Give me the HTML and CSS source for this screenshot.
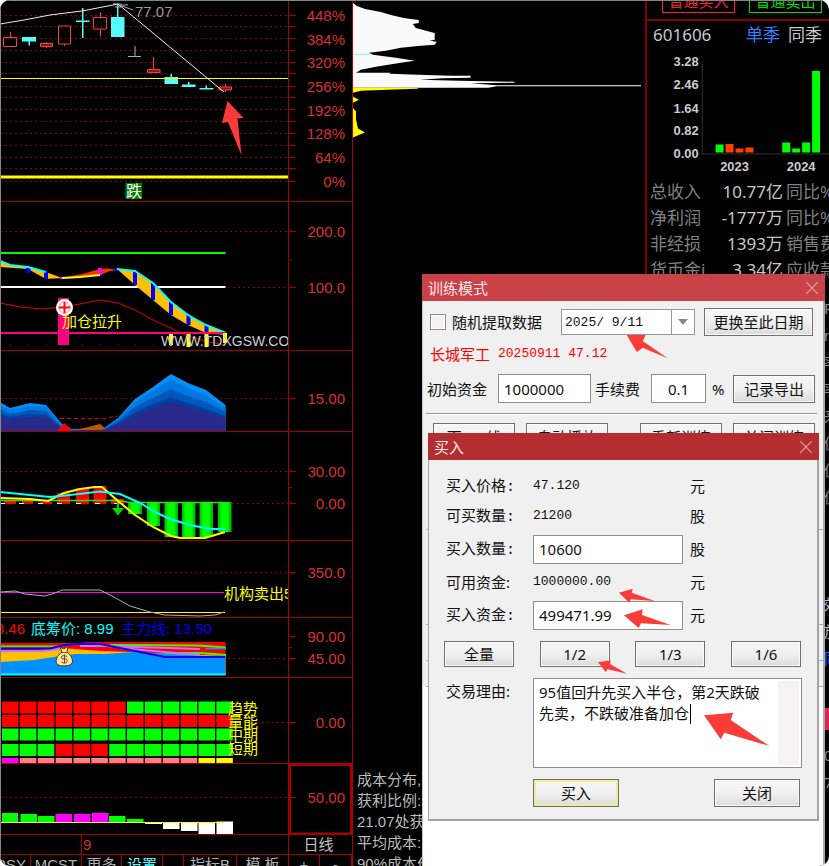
FILE: index.html
```html
<!DOCTYPE html>
<html lang="zh-CN">
<head>
<meta charset="utf-8">
<meta name="viewport" content="width=device-width, initial-scale=1">
<title>训练模式</title>
<link rel="stylesheet" href="styles.css">
</head>
<body>
<div class="app">
  <main class="charts">
    <svg class="pane" viewBox="0 0 352 202">
      <defs><clipPath id="plot"><rect x="0" y="0" width="288" height="866"/></clipPath></defs>
      <path class="dots" d="M0 15.5H288M0 26.5H288M0 38.5H288M0 50.5H288M0 62.5H288M0 73.5H288M0 86.5H288M0 97.5H288M0 109.5H288M0 121.5H288M0 133.5H288M0 145.5H288M0 157.5H288M0 168.5H288M0 181.5H288"/>
      <path class="axis" d="M288.5 0V202M289 15.5h7M289 26.5h7M289 38.5h7M289 50.5h7M289 62.5h7M289 73.5h7M289 86.5h7M289 97.5h7M289 109.5h7M289 121.5h7M289 133.5h7M289 145.5h7M289 157.5h7M289 168.5h7M289 181.5h7M0 201.5H352"/>
      <g class="scale"><text x="345" y="21">448%</text><text x="345" y="45">384%</text><text x="345" y="68">320%</text><text x="345" y="92">256%</text><text x="345" y="116">192%</text><text x="345" y="139">128%</text><text x="345" y="163">64%</text><text x="345" y="187">0%</text></g>
      <g class="up">
        <path d="M3.5 37.5h13v9h-13zM10.5 32V37M58.5 26h12v18h-12zM64.5 44v2M93.500 17.500h13v11.500h-13zM100.500 12v5.500M100.500 29v7.500M153.500 57v13M225.500 84v8M46.500 42v6"/>
        <path class="flat" d="M40.5 43.5h12v3h-12zM147.500 69.500h12.500v3h-12.500zM219 87h12.500v3h-12.500z"/>
      </g>
      <path class="down" d="M22 37h14v4.500h-6v4h-1.500v-4h-6.500zM76 20.500h6V8h1.500v12.500h6v1.500h-6v16h-1.500v-16h-6zM111 17h6V5h1.500v12h6v20h-13.500zM164.500 77h6v-3h1.500v3h6v7h-13.500zM182 84.500h6v-2.500h1.500v2.500h6v2.500h-13.500zM199.500 88h6v-2.500h1.500v2.500h6.500v1.500h-14z"/>
      <path class="yellow" d="M0 78.500H288"/>
      <path class="yellow thick" d="M0 177H288"/>
      <path class="gray" d="M135 46V56M128 56.500h13M122 6l11 4M128 5l-7 0M113 4h8v3h-6"/>
      <path class="white" d="M0 24L24 20L50 15L82 11L118 4L224 92"/>
      <text class="peak" x="135" y="17">77.07</text>
      <rect x="125.500" y="183" width="16.500" height="16" fill="#008000"/>
      <text class="badge" x="126" y="197">跌</text>
      <path class="mark" d="M227.500 101L243.500 118L237.500 118.500L241.500 155.500L228 122L222 123Z"/>
    </svg>
    <svg class="pane" viewBox="0 202 352 149">
      <path class="dots" d="M0 231.500H288M228 287.500H288"/>
      <path class="axis" d="M288.500 202V351M289 231.500h7M289 260h3M289 287.500h7M0 350.500H352"/>
      <g class="scale"><text x="345" y="237">200.0</text><text x="345" y="293">100.0</text></g>
      <path d="M0 253H225.500" stroke="#0f0" stroke-width="2"/>
      <path d="M0 287H225.500" stroke="#fff" stroke-width="2"/>
      <path d="M0 261L10 265L28 267L46 272L62 278L46 279L28 269L0 267ZM117 269L135 271L153 283L171 302L188 315L206 325L226 333V335L206 333L188 325L171 315L153 300L135 285Z" fill="#ffc000"/>
      <path d="M62 278L82 274L100 269L108 268.500L117 270L110 271L100 275L80 277Z" fill="#ff3000"/>
      <path d="M26 267h4v3h-4zM26.500 268h4v5h-4zM44 272h4v7h-4zM133 271h4v14h-4zM151 282h4v18h-4zM169 301h4v14h-4zM186.500 314h4v11h-4zM204.500 325h4v8h-4zM115 268h4v3h-4z" fill="#00f"/>
      <path d="M98 268h4v7h-4zM60 277h4v2h-4z" fill="#f0f"/>
      <path d="M0 261L10 265L28 267L46 272M117 269L135 271L153 283L171 302L188 315L206 325L226 333" class="cyan"/>
      <path d="M62 278L80 277L100 275" stroke-width="2" class="yellow"/>
      <path d="M0 303L20 307L42 309L64 307L85 303L100 300L118 303L135 310L153 320L171 328L185 335L205 341L225 345" class="redline"/>
      <path d="M58 298h11v47h-11z" fill="#ff0080"/>
      <path d="M0 333H226" stroke="#ff0080" stroke-width="2"/>
      <path d="M10 345h1M28 345h1M46 345h1M82 345h1M100 345h1M118 345h1M135 345h1M153 345h1" class="redline"/>
      <path d="M169 334h4v11h-4zM186.500 334h4v13h-4zM204.500 334h4v13h-4zM223 333h4v10h-4z" fill="#ff0"/>
      <g clip-path="url(#plot)"><text class="watermark" x="161" y="346">WWW.TDXGSW.COM</text></g>
      <circle cx="64.500" cy="307.500" r="8.500" fill="#fff"/>
      <path d="M58.500 307.500h12M64.500 301.500v12" stroke="#f00" stroke-width="2"/>
      <circle cx="64.500" cy="307.500" r="5.500" fill="none" stroke="#f66" stroke-width=".8"/>
      <text class="note" x="62" y="327">加仓拉升</text>
    </svg>
    <svg class="pane" viewBox="0 351 352 81">
      <path class="dots" d="M0 398.500H288"/>
      <path d="M0 402L10 408L30 403L46 405L62 424L72 429L104 428L118 418L135 399L153 387L171 374L188 383L206 390L225.500 405V431H0Z" fill="#0090f8"/>
      <path d="M0 405L10 410L30 406L46 407L62 425L72 430L104 429L118 419L135 402L153 391L171 379L188 388L206 395L225.500 408V431H0Z" fill="#0078e0"/>
      <path d="M0 409L10 414L30 410L46 411L62 427L72 430L104 429L118 421L135 407L153 398L171 389L188 396L206 402L225.500 412V431H0Z" fill="#0058bc"/>
      <path d="M0 413L10 417L30 414L46 415L62 428L72 430L104 430L118 423L135 412L153 404L171 397L188 403L206 409L225.500 416V431H0Z" fill="#0040a0"/>
      <path d="M0 416L10 419L30 417L46 417L62 428L72 430L104 430L118 424L135 415L153 408L171 402L188 407L206 412L225.500 418V431H0Z" fill="#29298c"/>
      <path d="M76 430L88 427L100 424L105 428L102 430Z" fill="#b45a00"/>
      <path class="redline" stroke-dasharray="4 3" d="M60 418.500H104L118 416"/>
      <path d="M57 431L64.500 423L72 431Z" fill="#f00"/>
      <path class="axis" d="M288.500 351V432M289 398.500h7M0 431.500H352"/>
      <g class="scale"><text x="345" y="404">15.00</text></g>
    </svg>
    <svg class="pane" viewBox="0 432 352 109">
      <defs><linearGradient id="bar"><stop offset="0" stop-color="#0b0"/><stop offset=".3" stop-color="#0f0"/><stop offset=".7" stop-color="#0f0"/><stop offset="1" stop-color="#0a0"/></linearGradient></defs>
      <path class="dots" d="M0 471.500H288M232 503.500H288"/>
      <path class="axis" d="M288.500 432V541M289 471.500h7M289 487.500h3M289 503.500h7M0 540.500H352"/>
      <g class="scale"><text x="345" y="477">30.00</text><text x="345" y="509">0.00</text></g>
      <path d="M4 500h12v4h-12zM22 501h11v3h-11zM40 502h12v2h-12zM57 493h13v11h-13zM76 488h13v16h-13zM93.500 486h13v18h-13zM111 499h13v5h-13z" fill="#f00"/>
      <g fill="url(#bar)"><rect x="128" y="502" width="14" height="12"/><rect x="147" y="502" width="13" height="24"/><rect x="164.500" y="502" width="13.500" height="35"/><rect x="182" y="502" width="13.500" height="36"/><rect x="199.500" y="502" width="13.500" height="35"/><rect x="218" y="502" width="13.500" height="30"/></g>
      <path d="M0 503.500H128" stroke="#fff" stroke-dasharray="5 14"/>
      <path d="M0 500.500H118L130 502.500H224" stroke="#30e000" fill="none" stroke-width="1.500"/>
      <path d="M117 500h2v8h5L118 515.500L112 508h5z" fill="#00d800"/>
      <path class="yellow curve" d="M0 498L30 499L48 501L64 493L80 489L95 487L102 487L118 501L135 515L153 527L171 536L180 538L205 538L225 532"/>
      <path class="cyan" d="M0 492L30 495L50 497L70 495L100 491.500L120 494L140 503L155 512L170 519L190 525L210 529L226 529"/>
    </svg>
    <svg class="pane" viewBox="0 541 352 77">
      <path class="dots" d="M0 572.500H288"/>
      <path class="axis" d="M288.500 541V618M289 572.500h7M0 617.500H352"/>
      <g class="scale"><text x="345" y="578">350.0</text></g>
      <path d="M0 592.500H224" stroke="#f0f"/>
      <path class="yellow" d="M0 612.500H225"/>
      <path class="gray" d="M0 592L15 591L25 594L45 596L55 593L62 590L100 590L112 596L130 606L150 612L165 615L200 616L215 615L224 612"/>
      <g clip-path="url(#plot)"><text class="note" x="224" y="599">机构卖出5</text></g>
    </svg>
    <svg class="pane" viewBox="0 618 352 60">
      <path class="dots" d="M228 658.500H288"/>
      <path class="axis" d="M288.500 618V678M289 636.500h7M289 647.500h3M289 658.500h7M0 677.500H352"/>
      <g class="scale"><text x="345" y="642">90.00</text><text x="345" y="664">45.00</text></g>
      <g class="legend"><text x="25" y="634" fill="#f00" text-anchor="end">8.46</text><text x="31" y="634" fill="#0ff">底筹价: 8.99</text><text x="121" y="634" fill="#00e">主力线: 13.50</text></g>
      <path d="M0 643H80L84 642H225.500V675H0Z" fill="#f00"/>
      <path d="M0 652L40 650L62 648L100 651L130 652L225.500 656V675H0Z" fill="#ffc000"/>
      <path d="M0 662L34 660L60 656L75 654H105L135 652L225.500 657V675H0Z" fill="#0090ff"/>
      <path d="M0 646.500H60M110 645L198 645.500L226 647.500M165 653H200L226 655" stroke="#3f0" stroke-width="2" fill="none"/>
      <path d="M0 651H40L60 649M120 648L165 652L200 655M80 646H105L200 649" stroke="#d06cff" stroke-width="2" fill="none"/>
      <path d="M205 648.500H226" stroke="#2090ff" stroke-width="1.500"/>
      <path d="M0 648.500H50L64 645L85 643.500L100 644L130 650L165 657H225" stroke="#00f" stroke-width="2" fill="none"/>
      <path class="cyan" d="M0 674.500H225.500"/>
      <path d="M60 647L64 649L68 646L67 652Q73 657 72.500 662Q71 666 64 666Q56 666 56 661Q56 656 62 652Z" fill="#ffe9a0" stroke="#653000"/>
      <path d="M61.500 652.500h6" stroke="#a05000"/>
      <path d="M67 656.500q-5-2-5.500.5t3 2t2.500 2.500t-5.500.5M64.500 654.500v8.500" stroke="#843c28" fill="none"/>
    </svg>
    <svg class="pane" viewBox="0 678 352 86">
      <path class="dots" d="M257 722.500H288"/>
      <path class="axis" d="M288.500 678V764M289 722.500h7M0 763.500H352"/>
      <g class="scale"><text x="345" y="728">0.00</text></g>
      <path d="M0 722H232" stroke="#500"/>
      <g class="cells">
        <path stroke="#f00" d="M2 707.500H126M2 721H234M55.600 750H109"/>
        <path stroke="#0f0" d="M127 707.500H234M2 734.500H234M2 750H55M109.200 750H234"/>
      </g>
      <g class="cells foot"><path stroke="#f0f" d="M2 760.500H19"/><path stroke="#ff8080" d="M19.900 760.500H198"/><path stroke="#ff0" d="M198.500 760.500H234"/></g>
      <g class="note"><text x="228" y="714">趋势</text><text x="228" y="727">量能</text><text x="228" y="740">中期</text><text x="228" y="754">短期</text></g>
    </svg>
    <svg class="pane" viewBox="0 764 352 71">
      <path class="dots" d="M0 797.500H288"/>
      <path class="axis" d="M288.500 764V835M289 797.500h7M0 834.500H352"/>
      <path d="M290 765H351V833.500H290Z" stroke="#a80000" stroke-width="2" fill="none"/>
      <g class="scale"><text x="345" y="803">50.00</text></g>
      <path d="M2 813h16v9h-16zM20.500 814h16.500v8h-16.500zM38 816h16.500v6h-16.500zM109 816h16.500v6h-16.500zM127 819h16.500v3h-16.500z" fill="#0f0"/>
      <path d="M55.500 814h16.500v8h-16.500zM74 814h16.500v8h-16.500zM92 813h16.500v9h-16.500z" fill="#f0f"/>
      <path d="M145 822h17v2h-17zM163 822h16.500v7h-16.500zM181 822h16.500v9h-16.500zM198.500 822h16.500v12h-16.500zM216.500 821.500h16.500v12.500h-16.500z" fill="#fff"/>
      <path class="yellow" d="M0 822.500H224"/>
    </svg>
    <div class="dates"><span class="month">9</span><span class="period">日线</span></div>
    <nav class="tabs">
      <button class="tab cut">RSY</button><button class="tab">MCST</button><button class="tab">更多</button><button class="tab active">设置</button><button class="tab" aria-label="空"></button><button class="tab">指标B</button><button class="tab">模 板</button><button class="tab">+</button><button class="tab">-</button>
    </nav>
  </main>

  <section class="spread">
    <svg class="pane" viewBox="352 0 293 145">
      <path fill="#fafafa" d="M352 3L356 6L364 9L380 12L390 15L403 18L418 20V23L412 24L415 28L430 32L434 33V40L429 41L436 42L434 45L420 46L400 48L385 51L368 53L372 55L395 58L414 61L400 63L375 67L360 70L355 73H389V74L417 75L450 76H470V78L442 78.500L419 80L458 81L514 82V83L470 83.500L496 85.500H641V86.500H496L488 88H352Z"/>
      <path fill="#ff0" d="M352 88H417V89L387 90L360 91L352 93ZM352 97L358 100L352 103ZM352 108L355 112V120L357 129L364 133L359 135L352 138Z"/>
      <path d="M352 54.500h18" stroke="#6ff"/>
    </svg>
    <div class="summary"><p>成本分布,日期</p><p>获利比例:</p><p>21.07处获利盘</p><p>平均成本:</p><p>90%成本价</p></div>
  </section>

  <aside class="quote">
    <div class="trade"><button class="order buy">普通买入</button><button class="order sell">普通卖出</button></div>
    <header class="stock"><span>601606</span><a href="#" class="season">单季</a><a href="#" class="same">同季</a></header>
    <svg class="pane" viewBox="646 50 183 128">
      <path d="M701.500 62V154.500H829" stroke="#333" fill="none"/>
      <g class="values"><text x="698" y="66">3.28</text><text x="698" y="89">2.46</text><text x="698" y="113">1.64</text><text x="698" y="135">0.82</text><text x="698" y="159">0.00</text></g>
      <g class="years"><text x="734" y="172">2023</text><text x="801" y="172">2024</text></g>
      <path d="M715 145h8v8h-8zM782 143h8v10h-8zM792 149h8v4h-8zM802 143h8v10h-8zM812 71h8v82h-8z" fill="#0f0"/>
      <path d="M725 144.500h8v8.500h-8zM735 149h8v4h-8zM745 148h8v5h-8z" fill="#ff4000"/>
    </svg>
    <table class="finance">
      <tbody>
        <tr><th>总收入</th><td>10.77亿</td><th>同比%</th></tr>
        <tr><th>净利润</th><td>-1777万</td><th>同比%</th></tr>
        <tr><th>非经损</th><td>1393万</td><th>销售费</th></tr>
        <tr><th>货币金i</th><td>3.34亿</td><th>应收款</th></tr>
      </tbody>
    </table>
    <div class="edge"><p>P</p><p>n</p><p>率</p><p>率</p><p>来</p><p>值</p><p>值</p><p>值</p></div>
    <div class="edge low"><p>效</p><p>放</p><p class="link">同</p></div>
    <div class="flag"></div>
    <div class="edge"><p>0</p><p>7</p></div>
  </aside>

  <section class="window training" aria-label="训练模式">
    <header class="title"><span>训练模式</span><button class="close" aria-label="关闭窗口"><svg viewBox="0 0 12 12"><path d="M1 1L11 11M11 1L1 11"/></svg></button></header>
    <div class="row pick">
      <input type="checkbox" id="random" class="check"><label for="random" class="random">随机提取数据</label>
      <div class="date"><input type="text" aria-label="日期" value="2025/ 9/11"><button aria-label="选择日期"><svg viewBox="0 0 10 6"><path d="M0 0H10L5 6Z"/></svg></button></div>
      <button class="btn wide">更换至此日期</button>
    </div>
    <p class="current"><span>长城军工</span><span class="mono">20250911 47.12</span></p>
    <div class="row funds">
      <label for="fund">初始资金</label><input class="field fund" id="fund" value="1000000">
      <label for="fee">手续费</label><input class="field fee" id="fee" value="0.1"><span class="percent">%</span>
      <button class="btn export">记录导出</button>
    </div>
    <hr>
    <div class="row actions"><button class="btn">下一K线</button><button class="btn">自动播放</button><button class="btn">重新训练</button><button class="btn">关闭训练</button></div>
    <div class="group first"></div><div class="group second"></div><div class="group third"></div>
    <svg class="marks" viewBox="422 274 403 592"><path class="mark" d="M626.700 335H645.700L642.700 341L668 358.500L642.700 347.700L636.700 352Z"/></svg>
  </section>

  <section class="window order-window" aria-label="买入">
    <header class="title"><span>买入</span><button class="close" aria-label="关闭窗口"><svg viewBox="0 0 12 12"><path d="M1 1L11 11M11 1L1 11"/></svg></button></header>
    <div class="form">
      <span>买入价格<i>:</i></span><span class="mono">47.120</span><span>元</span>
      <span>可买数量<i>:</i></span><span class="mono">21200</span><span>股</span>
      <label for="count">买入数量<i>:</i></label><input class="field" id="count" value="10600"><span>股</span>
      <span>可用资金:</span><span class="mono">1000000.00</span><span>元</span>
      <label for="amount">买入资金<i>:</i></label><input class="field" id="amount" value="499471.99"><span>元</span>
    </div>
    <div class="parts"><button class="btn">全量</button><button class="btn">1/2</button><button class="btn">1/3</button><button class="btn">1/6</button></div>
    <div class="reason">
      <label for="why">交易理由:</label>
      <div class="memo"><textarea id="why">95值回升先买入半仓，第2天跌破先卖，不跌破准备加仓</textarea><span class="track"></span><span class="caret"></span></div>
    </div>
    <div class="confirm"><button class="btn primary">买入</button><button class="btn">关闭</button></div>
    <svg class="marks" viewBox="428 433 391 388">
      <path class="mark" d="M619 592.700L632.700 588.700L631.700 592.700L654.700 601L630.700 599.300L629.300 602.700ZM624 615.300L642.700 609.300L642 615L670.700 625L641 623.300L638.700 628ZM598 662.300L610.700 660.300L610 664L627 673.700L607.700 669.300L605.700 672ZM704 715.300L733.300 712.700L730.700 720L769.300 746L724.300 732.700L720.700 739.300Z"/>
    </svg>
  </section>
</div>
</body>
</html>
```
FILE: styles.css
```css
* { box-sizing: border-box; }
body { margin: 0; background: #fff; font: 15px/20px "Noto Sans", "Noto Sans CJK SC", sans-serif; color: #111; }
p { margin: 0; }
i { font-style: normal; font-family: "Liberation Mono", monospace; }
button, input, textarea { font: inherit; color: inherit; margin: 0; padding: 0; border-radius: 0; }
button { white-space: nowrap; }

.app { position: relative; display: grid; grid-template-columns: 352fr 293fr 184fr; height: 100vh; overflow: hidden; border-radius: 10px; background: #000; }
.app::after { content: ""; position: absolute; inset: 0; border: solid #858585; border-width: 1px 0 0 1px; pointer-events: none; }
.charts, .spread, .quote { min-width: 0; overflow: hidden; }
.pane { display: block; width: 100%; height: auto; }

/* chart strokes */
.dots { stroke: #900000; stroke-dasharray: 2 3; fill: none; }
.axis { stroke: #a00000; fill: none; }
.scale { font: 15px "Liberation Sans", sans-serif; fill: #d83030; text-anchor: end; }
.up { stroke: #f83c3c; fill: none; }
.up .flat { fill: #801818; }
.down { fill: #54fcfc; }
.yellow { stroke: #ff0; fill: none; }
.yellow.thick { stroke-width: 3; }
.yellow.curve, .cyan { stroke-width: 2; }
.cyan { stroke: #0ff; fill: none; }
.gray { stroke: #b0b0b0; fill: none; }
.white { stroke: #eee; fill: none; }
.redline { stroke: #e00000; fill: none; }
.mark { fill: #fd3b38; }
.peak { font: 15px "Liberation Sans", sans-serif; fill: #999; }
.badge { font: 16px "Noto Sans CJK SC", sans-serif; fill: #fff; }
.watermark { font: 14px "Liberation Sans", sans-serif; fill: #ccc; }
.note { font: 15px "Liberation Sans", "Noto Sans CJK SC", sans-serif; fill: #ff0; }
.legend { font: 15px "Liberation Sans", "Noto Sans CJK SC", sans-serif; }
.cells { stroke-width: 12; stroke-dasharray: 16.500 1.360; }
.cells.foot { stroke-width: 5; }

.dates { display: grid; grid-template-columns: 81fr 207fr 64fr; height: 20px; border-bottom: 1px solid #a00000; }
.month { grid-column: 2; border-left: 1px solid #a00000; color: #d83030; padding-left: 1px; font-family: "Liberation Sans", sans-serif; }
.period { border-left: 1px solid #a00000; color: #c0c0c0; padding-right: 4px; text-align: center; line-height: 18px; }
.tabs { display: grid; grid-template-columns: 31fr 51fr 40fr 41fr 21fr 53fr 52fr 31fr 32fr; }
.tab { height: 20px; line-height: 18px; border: 0; border-right: 1px solid #a00000; background: none; color: #b0b0b0; font-family: "Liberation Sans", "Noto Sans CJK SC", sans-serif; text-align: center; overflow: hidden; }
.tab.cut { direction: rtl; padding-right: 4px; }
.tab.active { color: #54fcfc; }

.spread { display: flex; flex-direction: column; justify-content: space-between; border-left: 1px solid #b00000; }
.summary { height: 97px; padding-left: 4px; font: 15px/21px "Liberation Sans", "Noto Sans CJK SC", sans-serif; color: #bbb; white-space: nowrap; }

/* quote panel */
.quote { border-left: 2px solid #800000; color: #c8c8c8; font-size: 17px; white-space: nowrap; }
.trade { display: flex; gap: 14px; height: 21px; padding-left: 15px; border-bottom: 2px solid #800000; }
.order { flex: 0 0 73px; height: 24px; margin-top: -11px; border: 1px solid; background: none; font-size: 15px; line-height: 22px; }
.order.buy { color: #f22; }
.order.sell { color: #0d0; }
.stock { display: flex; gap: 8px; height: 29px; padding: 0 7px 0 6px; line-height: 27px; }
.stock a { text-decoration: none; }
.season { margin-left: auto; color: #2c82ff; }
.same { color: #c8c8c8; }
.values, .years { font: bold 13px "Liberation Sans", sans-serif; fill: #ccc; }
.values { text-anchor: end; }
.years { text-anchor: middle; }
.finance { border-collapse: collapse; table-layout: fixed; width: 100%; margin-top: 2px; }
.finance tr { height: 26px; }
.finance th, .finance td { padding: 0; line-height: 26px; overflow: hidden; }
.finance th { width: 60px; padding-left: 3px; font-weight: 400; color: #808080; text-align: left; }
.finance td { text-align: right; }
.finance th:last-child { width: 46px; }
.edge { padding: 12px 0 0; font-size: 15px; line-height: 27px; color: #888; }
.edge p { width: 5px; margin-left: auto; }
.edge.low { padding-top: 80px; color: #bbb; }
.edge .link { color: #2c62ff; }
.flag { height: 22px; margin-top: 36px; background: #dc2850; }

/* floating windows */
.window { position: absolute; background: #f0f0f0; }
.title { display: flex; align-items: center; justify-content: space-between; height: 27px; padding: 0 6px; color: #ffe8e8; }
.close { display: flex; padding: 0; border: 0; background: none; }
.close svg { width: 14px; height: 14px; stroke: #e8a0a0; fill: none; }
.training { top: 274px; right: 4px; bottom: 0; width: 403px; overflow: hidden; background: linear-gradient(#f0f0f0 412px, #fff 412px); box-shadow: inset -2px 0 #a8a8a8, inset 1px 0 #c8c8c8; }
.training .title { background: #c94247; }
.row { display: flex; align-items: center; }
.pick { height: 40px; padding: 2px 12px 0 8px; }
.check { appearance: none; width: 16px; height: 16px; border: 1px solid #8e8e8e; background: #f3f2ef; box-shadow: inset 0 0 0 1px #fff; }
.random { margin: 0 auto 0 6px; }
.date { display: flex; width: 134px; height: 26px; margin-right: 9px; border: 1px solid #999; background: #fff; }
.date input { flex: 1; min-width: 0; padding-left: 3px; border: 0; font: 13px "Liberation Mono", monospace; }
.date button { display: flex; align-items: center; justify-content: center; width: 23px; border: 0; border-left: 1px solid #999; background: #fff; }
.date svg { width: 10px; height: 6px; fill: #888; }
.btn { height: 28px; border: 1px solid #707070; background: linear-gradient(#f6f6f6, #f0f0f0 50%, #dcdcdc); box-shadow: inset 0 0 0 1px #fbfbfb; line-height: 24px; }
.wide { width: 109px; }
.current { display: flex; gap: 8px; align-items: center; padding: 0 0 6px 8px; color: #f00; height: 31px; }
.mono { font-family: "Liberation Mono", monospace; font-size: 13px; }
.funds { height: 33px; padding: 0 10px 0 5px; }
.field { height: 29px; min-width: 0; border: 1px solid #8e8e8e; background: #fff; padding: 0 5px; }
.fund { width: 93px; margin: 0 4px 0 11px; }
.fee { width: 55px; margin: 0 6px 0 11px; text-align: center; }
.export { width: 82px; margin-left: auto; }
hr { height: 2px; margin: 8px 8px 8px 4px; border: 0; border-top: 1px solid #999; background: #fff; }
.actions { gap: 11px; padding: 0 10px 0 11px; }
.actions .btn { width: 82px; }
.actions .btn:nth-child(3) { margin-left: auto; }
.group { margin: 0 2px 0 4px; border-top: 1px solid #aaa; }
.first { margin-top: 78px; height: 95px; }
.second { height: 36px; }
.third { height: 27px; border-bottom: 1px solid #aaa; }
.marks { position: absolute; top: 0; left: 0; width: 100%; height: auto; pointer-events: none; }

.order-window { top: 433px; right: 10px; width: 391px; padding-bottom: 14px; box-shadow: inset -2px -2px #a5a5a5, inset 1px 0 #a5a5a5; }
.order-window .title { background: #b32d31; }
.form { display: grid; grid-template-columns: 80px 150px 1fr; column-gap: 7px; grid-template-rows: 30px 30px 36px 30px 36px; align-items: center; padding: 11px 18px 8px; }
.form .field { width: 100%; }
.parts { display: flex; justify-content: space-between; padding: 0 18px 0 16px; }
.parts .btn { width: 70px; height: 26px; line-height: 22px; }
.reason { display: flex; justify-content: space-between; padding: 11px 17px 11px 18px; }
.reason label { padding-top: 3px; }
.memo { position: relative; width: 269px; height: 90px; }
.memo textarea { display: block; width: 100%; height: 100%; padding: 3px 34px 0 5px; border: 1px solid #8e8e8e; background: #fff; line-height: 21px; resize: none; overflow: hidden; }
.track { position: absolute; top: 3px; right: 3px; bottom: 3px; width: 21px; background: #f4f3f1; }
.caret { position: absolute; top: 26px; left: 157px; width: 1px; height: 20px; background: #000; }
.confirm { display: flex; justify-content: space-between; padding: 0 19px 0 105px; }
.confirm .btn { width: 86px; }
.primary { box-shadow: inset 0 0 0 2px #eeee90; }
```
